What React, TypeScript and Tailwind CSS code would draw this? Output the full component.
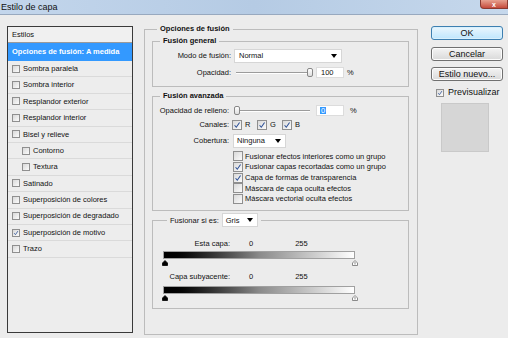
import React from "react";

const estilos: [string, boolean, boolean][] = [
  ["Sombra paralela", false, false],
  ["Sombra interior", false, false],
  ["Resplandor exterior", false, false],
  ["Resplandor interior", false, false],
  ["Bisel y relieve", false, false],
  ["Contorno", true, false],
  ["Textura", true, false],
  ["Satinado", false, false],
  ["Superposición de colores", false, false],
  ["Superposición de degradado", false, false],
  ["Superposición de motivo", false, true],
  ["Trazo", false, false],
];

const opcionesAvanzadas: [string, boolean][] = [
  ["Fusionar efectos interiores como un grupo", false],
  ["Fusionar capas recortadas como un grupo", true],
  ["Capa de formas de transparencia", true],
  ["Máscara de capa oculta efectos", false],
  ["Máscara vectorial oculta efectos", false],
];

function Box({ on, size }: { on?: boolean; size: string }) {
  return (
    <span
      className={`${size} shrink-0 inline-flex border border-[#8f8f8f] bg-gradient-to-br from-[#d9d9d9] to-[#fbfbfb]`}
    >
      {on && (
        <svg viewBox="0 0 10 10" className="w-full h-full">
          <path d="M2 5.3 L4.1 7.8 L8.2 1.8" stroke="#2b4f96" strokeWidth="1.3" fill="none" />
        </svg>
      )}
    </span>
  );
}

function Arrow() {
  return (
    <svg width="6" height="4" viewBox="0 0 6 4">
      <path d="M0 0H6L3 4Z" fill="#000" />
    </svg>
  );
}

function Select({ text, w, pl }: { text: string; w: string; pl: string }) {
  return (
    <div className={`${w} ${pl} h-[14px] bg-white border border-[#d6d6d6] flex items-center justify-between pr-[4px]`}>
      <span>{text}</span>
      <Arrow />
    </div>
  );
}

function Slider({ w, thumb }: { w: string; thumb: "left" | "right" }) {
  return (
    <div className={`${w} relative h-[10px] flex items-center`}>
      <div className="w-full h-[2px] border-t border-[#9c9c9c] border-b border-b-white" />
      <div
        className={`absolute top-[0.5px] ${thumb === "left" ? "left-0" : "right-0"} w-[6px] h-[9px] rounded-[2px] border border-[#878787] bg-gradient-to-b from-white to-[#dedede]`}
      />
    </div>
  );
}

function Thumb({ dark }: { dark?: boolean }) {
  return (
    <svg width="6" height="6" viewBox="0 0 6 6">
      <path
        d="M3 0.5 L5.5 3 V5.5 H0.5 V3 Z"
        fill={dark ? "#000" : "#fff"}
        stroke={dark ? "#000" : "#6f6f6f"}
        strokeWidth="0.8"
      />
      {!dark && <path d="M3 2 V4.5" stroke="#6f6f6f" strokeWidth="0.8" />}
    </svg>
  );
}

function Button({ label, primary }: { label: string; primary?: boolean }) {
  return (
    <div
      className={`h-[14px] w-[72px] rounded-[3px] border flex items-center justify-center text-[9px] ${
        primary
          ? "border-[#3c7fb1] bg-gradient-to-b from-[#eaf6fd] to-[#bee6fd] shadow-[inset_0_0_0_1px_#d9f0fc]"
          : "border-[#707070] bg-gradient-to-b from-[#f4f4f4] to-[#d9d9d9] shadow-[inset_0_0_0_1px_#fcfcfc]"
      }`}
    >
      {label}
    </div>
  );
}

function Estilos() {
  return (
    <div className="mt-[2px] w-[126px] h-[307px] shrink-0 border border-[#3a3a3a] bg-[#ededed] flex flex-col">
      <div className="h-[16px] border-b border-[#9a9a9a] bg-[#f0f0f0] pl-[4px] flex items-center">Estilos</div>
      <div className="h-[18px] bg-[#3399ff] text-white font-bold pl-[4px] flex items-center">
        Opciones de fusión: A medida
      </div>
      {estilos.map(([name, sub, on]) => (
        <div
          key={name}
          className={`h-[16.4px] shrink-0 border-b border-[#dadada] flex items-center gap-[3px] ${sub ? "pl-[14px]" : "pl-[4px]"}`}
        >
          <Box on={on} size="w-[8px] h-[8px]" />
          <span>{name}</span>
        </div>
      ))}
    </div>
  );
}

function Opciones() {
  return (
    <fieldset className="ml-[11px] w-[274px] h-[311px] shrink-0 border border-[#bcbcbc] pl-[7px] pr-[8px]">
      <legend className="ml-[5px] px-[3px] leading-[10px] font-bold">Opciones de fusión</legend>

      <fieldset className="mt-[2px] border border-[#bcbcbc] pb-[8px]">
        <legend className="ml-[7px] px-[3px] leading-[10px] font-bold">Fusión general</legend>
        <div className="mt-[3px] h-[14px] flex items-center">
          <span className="w-[78px] text-right">Modo de fusión:</span>
          <div className="ml-[3px]">
            <Select text="Normal" w="w-[108px]" pl="pl-[4px]" />
          </div>
        </div>
        <div className="mt-[4px] h-[11px] flex items-center">
          <span className="w-[78px] text-right">Opacidad:</span>
          <div className="ml-[5px]">
            <Slider w="w-[77px]" thumb="right" />
          </div>
          <div className="ml-[3px] w-[28px] h-[11px] bg-white border border-[#dcdcdc] pl-[4px] flex items-center">100</div>
          <span className="ml-[3px]">%</span>
        </div>
      </fieldset>

      <fieldset className="mt-[4px] border border-[#bcbcbc] pb-[6px]">
        <legend className="ml-[7px] px-[3px] leading-[10px] font-bold">Fusión avanzada</legend>
        <div className="mt-[4px] h-[11px] flex items-center">
          <span className="w-[76px] text-right">Opacidad de relleno:</span>
          <div className="ml-[5px]">
            <Slider w="w-[76px]" thumb="left" />
          </div>
          <div className="ml-[6px] w-[28px] h-[11px] bg-white border border-[#dcdcdc] pl-[3px] flex items-center">
            <span className="bg-[#3399ff] text-white px-[1px]">0</span>
          </div>
          <span className="ml-[6px]">%</span>
        </div>
        <div className="mt-[4px] h-[10px] flex items-center">
          <span className="w-[76px] text-right">Canales:</span>
          <div className="ml-[3px] flex">
            {["R", "G", "B"].map((c) => (
              <div key={c} className="w-[25px] flex items-center gap-[3px]">
                <Box on size="w-[10px] h-[10px]" />
                <span>{c}</span>
              </div>
            ))}
          </div>
        </div>
        <div className="mt-[4px] h-[14px] flex items-center">
          <span className="w-[76px] text-right">Cobertura:</span>
          <div className="ml-[4px]">
            <Select text="Ninguna" w="w-[53px]" pl="pl-[3px]" />
          </div>
        </div>
        <div className="mt-[3px] flex flex-col">
          {opcionesAvanzadas.map(([t, on]) => (
            <div key={t} className="h-[10.7px] pl-[80px] flex items-center gap-[2px]">
              <Box on={on} size="w-[10px] h-[10px]" />
              <span>{t}</span>
            </div>
          ))}
        </div>
      </fieldset>

      <fieldset className="mt-[2px] border border-[#bcbcbc] pb-[7px]">
        <legend className="ml-[14px] px-[3px] h-[14px] flex items-center">
          <span>Fusionar si es:</span>
          <div className="ml-[3px]">
            <Select text="Gris" w="w-[36px]" pl="pl-[3px]" />
          </div>
        </legend>
        {["Esta capa:", "Capa subyacente:"].map((t, i) => (
          <div key={t} className={i === 0 ? "mt-[11px]" : "mt-[5px]"}>
            <div className="h-[10px] flex items-center">
              <span className="w-[77px] text-right">{t}</span>
              <span className="ml-[19px]">0</span>
              <span className="ml-[42px]">255</span>
            </div>
            <div className={`${i === 0 ? "mt-[3px]" : "mt-[5px]"} ml-[10px] w-[192px] h-[8px] border border-[#a0a0a0] bg-gradient-to-r from-black via-[#8a8a8a] to-white`} />
            <div className="mt-[1px] ml-[9px] w-[196px] h-[6px] flex justify-between">
              <Thumb dark />
              <Thumb />
            </div>
          </div>
        ))}
      </fieldset>
    </fieldset>
  );
}

function Acciones() {
  return (
    <div className="ml-[13px] w-[72px] flex flex-col text-[9px]">
      <div className="mt-[2px]">
        <Button label="OK" primary />
      </div>
      <div className="mt-[7px]">
        <Button label="Cancelar" />
      </div>
      <div className="mt-[6px]">
        <Button label="Estilo nuevo..." />
      </div>
      <div className="mt-[7px] h-[9px] pl-[5px] flex items-center gap-[4px]">
        <Box on size="w-[8px] h-[8px]" />
        <span>Previsualizar</span>
      </div>
      <div className="mt-[6px] ml-[10px] w-[48px] h-[49px] bg-[#d6d6d6] border border-[#c9c9c9]" />
    </div>
  );
}

export default function App() {
  return (
    <div className="w-[508px] h-[338px] overflow-hidden bg-[#ececec] text-[7.5px] leading-none text-[#111] font-['Liberation_Sans',Arial,sans-serif]">
      <div className="h-[15px] flex justify-between border-b border-[#98a9bf] bg-gradient-to-r from-[#c3d6ec] via-[#b5cbe4] to-[#c6d8ec]">
        <span className="pl-[1px] pt-[3px] text-[9px]">Estilo de capa</span>
        <div className="w-[28px] h-[9px] rounded-bl-[4px] border border-t-0 border-[#8a3a30] bg-gradient-to-b from-[#e6a190] to-[#c54a3c] flex items-center justify-center text-white text-[7px] leading-[7px] font-bold">
          x
        </div>
      </div>
      <div className="flex pl-[7px] pt-[9px]">
        <Estilos />
        <Opciones />
        <Acciones />
      </div>
    </div>
  );
}
